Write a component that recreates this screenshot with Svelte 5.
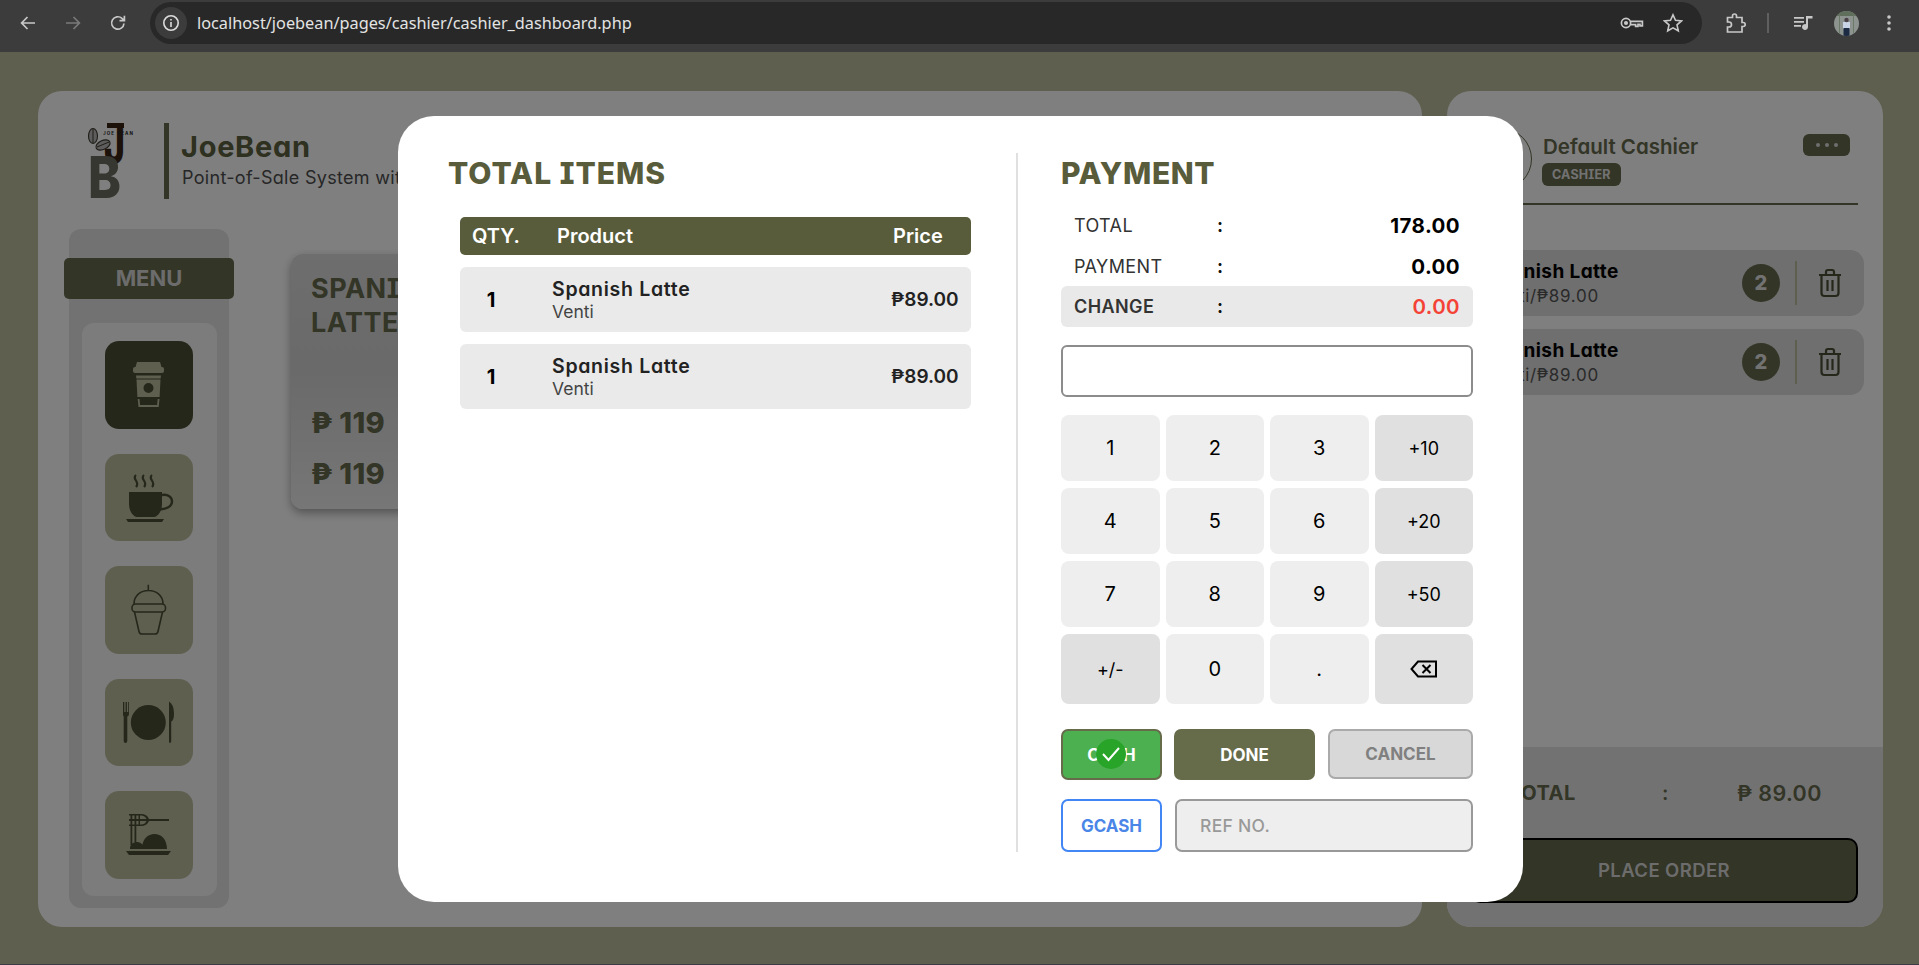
<script>
	const keys = [
		{ label: '1' }, { label: '2' }, { label: '3' }, { label: '+10', fn: true },
		{ label: '4' }, { label: '5' }, { label: '6' }, { label: '+20', fn: true },
		{ label: '7' }, { label: '8' }, { label: '9' }, { label: '+50', fn: true },
		{ label: '+/-', fn: true }, { label: '0' }, { label: '.' }, { label: 'back', fn: true }
	];
	const lines = [
		{ name: 'Spanish Latte', size: 'Venti', price: '₱89.00' },
		{ name: 'Spanish Latte', size: 'Venti', price: '₱89.00' }
	];
</script>

<div class="page">
	<header class="chrome">
		<div class="nav">
			<svg width="18" height="18" viewBox="0 0 18 18" fill="none" stroke="#c8c8c8" stroke-width="1.7"><path d="M16 9H3M8.5 3 2.6 9l5.9 6" /></svg>
			<svg width="18" height="18" viewBox="0 0 18 18" fill="none" stroke="#7a7a7a" stroke-width="1.7"><path d="M2 9h13M9.5 3l5.9 6-5.9 6" /></svg>
			<svg width="18" height="18" viewBox="0 0 18 18" fill="none" stroke="#c8c8c8" stroke-width="1.7"><path d="M15 9.5A6.2 6.2 0 1 1 13 4.4L15.2 6.5M15.4 1.8v4.9h-4.9" /></svg>
		</div>
		<div class="omnibox">
			<span class="chip">
				<svg width="18" height="18" viewBox="0 0 18 18" fill="none" stroke="#dcdcdc" stroke-width="1.6"><circle cx="9" cy="9" r="7.2" /><path d="M9 8v5M9 5v1.6" /></svg>
			</span>
			<span class="url">localhost/joebean/pages/cashier/cashier_dashboard.php</span>
			<svg class="key" width="24" height="16" viewBox="0 0 24 16" fill="none" stroke="#c8c8c8" stroke-width="1.7"><circle cx="6" cy="8" r="4.6" /><circle cx="6" cy="8" r="1.2" fill="#c8c8c8" /><path d="M10.6 6.4H22.4v4.4H20V9.4h-2v2h-2.4V9.6h-5" /></svg>
			<svg width="20" height="20" viewBox="0 0 20 20" fill="none" stroke="#c8c8c8" stroke-width="1.6"><path d="m10 1.8 2.5 5.5 6 .6-4.5 4 1.3 5.9-5.3-3-5.300 3 1.300-5.900-4.500-4 6-.6z" /></svg>
		</div>
		<div class="tools">
			<svg width="20" height="20" viewBox="0 0 20 20" fill="none" stroke="#c8c8c8" stroke-width="1.7"><path d="M1.500 4.500h5V3a2 2 0 0 1 4 0v1.500h5.500v5h1.200a2 2 0 0 1 0 4H16v5.500H1.500v-5h1.500a2.500 2.500 0 0 0 0-5H1.500z" /></svg>
			<span class="sep"></span>
			<svg width="20" height="18" viewBox="0 0 20 18" fill="#c8c8c8"><path d="M1 3h10v1.700H1zM1 7h10v1.700H1zM1 11h7v1.700H1zM13 2h6.500v2.500H15V13a3 3 0 1 1-2-2.800z" /></svg>
			<span class="avatar">
				<svg width="25" height="25" viewBox="0 0 25 25"><rect width="25" height="25" fill="#8d9490" /><rect width="25" height="5" fill="#5f6f5c" /><rect x="5" y="4" width="1" height="18" fill="#6b7a68" /><rect x="19" y="4" width="1" height="18" fill="#6b7a68" /><rect x="9" y="11" width="7" height="7" fill="#c9d3e6" /><rect x="9.500" y="17" width="6" height="8" fill="#1d2a44" /><circle cx="12.500" cy="9" r="2.200" fill="#4a4048" /></svg>
			</span>
			<svg width="6" height="18" viewBox="0 0 6 18" fill="#c8c8c8"><circle cx="3" cy="3" r="1.800" /><circle cx="3" cy="9" r="1.800" /><circle cx="3" cy="15" r="1.800" /></svg>
		</div>
	</header>

	<div class="dash">
		<main class="board">
			<div class="brand">
				<svg class="logo" width="46" height="78" viewBox="0 0 46 78">
					<text x="16" y="41" class="logo-j" textLength="21" lengthAdjust="spacingAndGlyphs">J</text>
					<rect x="19" y="1" width="17" height="5" fill="#3a2414" />
					<text x="0" y="76" class="logo-b" textLength="33" lengthAdjust="spacingAndGlyphs">B</text>
					<text x="15" y="13" class="logo-name" textLength="30">JOE BEAN</text>
					<ellipse cx="5" cy="14" rx="4.500" ry="7.500" fill="#bbb" stroke="#3d3a30" stroke-width="1.100" />
					<path d="M5 7v14" stroke="#3d3a30" />
					<ellipse cx="15" cy="23" rx="7.500" ry="4.500" transform="rotate(-25 15 23)" fill="#bbb" stroke="#3d3a30" stroke-width="1.100" />
					<path d="m9 25 12-5" stroke="#3d3a30" fill="none" />
				</svg>
				<span class="brand-rule"></span>
				<div>
					<div class="brand-name">JoeBean</div>
					<div class="brand-sub">Point-of-Sale System with Inventory</div>
				</div>
			</div>
			<div class="board-body">
				<nav class="menu">
					<div class="menu-title">MENU</div>
					<div class="menu-list">
						<div class="tile active">
							<svg viewBox="0 0 88 87" fill="currentColor">
								<path d="M32 21h23l1.500 5H30.500z" />
								<rect x="28" y="26" width="31" height="6" rx="2" />
								<path d="M31 34.500h25l-.4 3H31.400z" />
								<path fill-rule="evenodd" d="M31.500 38.500h24L54.600 56H32.400zM43.500 42a5 5 0 1 0 0 10 5 5 0 0 0 0-10z" />
								<path d="M32.700 58h1.800l.6 6h17l.6-6h1.800l-.8 8H33.500z" />
							</svg>
						</div>
						<div class="tile">
							<svg viewBox="0 0 88 87" fill="currentColor">
								<path d="M24 38h33v12c0 7-4 12.500-8 13H32c-4-.5-8-6-8-13z" />
								<path d="M57 41c6-1 10 2 10 6.500S62 55 55 55.500" fill="none" stroke="currentColor" stroke-width="2.400" />
								<path d="M21 65h38l-2 3H23z" />
								<path d="M31 21c-5 4 5 7 0 12M39 21c-5 4 5 7 0 12M47 21c-5 4 5 7 0 12" fill="none" stroke="currentColor" stroke-width="2.200" />
							</svg>
						</div>
						<div class="tile">
							<svg viewBox="0 0 88 87" fill="none" stroke="currentColor" stroke-width="1.600">
								<path d="M43.300 18.700v6M29 38c0-18 29-18 29 0" />
								<rect x="27" y="38" width="33.500" height="8" rx="3.500" />
								<path d="M29.500 46 34 65.500q.5 2.500 3 2.500h13q2.500 0 3-2.500L57.500 46" />
							</svg>
						</div>
						<div class="tile">
							<svg viewBox="0 0 88 87" fill="currentColor">
								<circle cx="43.300" cy="43.500" r="17.500" />
								<path d="M18 23h1.300v10h1.300V23h1.300v10h1.300V23H24v12q0 2-1.700 2.500V62q0 2-1.800 2t-1.800-2V37.500Q18 37 18 35z" />
								<path d="M64 22.500q5 3 5 12 0 7-2.800 8V62q0 2-1.200 2t-1-2z" />
							</svg>
						</div>
						<div class="tile">
							<svg viewBox="0 0 88 87" fill="currentColor">
								<path d="M21 60h45l-3 4H24z" />
								<path d="M37 58c0-10 6-15 12.500-15S62 48 62 58zM25 58c0-5 3-7 7-7s7 3 6 7z" />
								<path d="M24 23h12q6 0 8 5h20v2H44q-2 5-8 5H24v-1.500h12q4 0 5.500-3.500H24V28h17.500Q40 24.500 36 24.500H24z" />
								<path d="M25.500 23h1.800v31h-1.800zM29.500 23h1.800v28h-1.800zM33.500 23h1.500v12h-1.500z" />
							</svg>
						</div>
					</div>
				</nav>
				<article class="product">
					<h3>SPANISH<br />LATTE</h3>
					<div class="product-price">₱ 119</div>
					<div class="product-price">₱ 119</div>
				</article>
			</div>
		</main>

		<aside class="cart">
			<div class="cashier">
				<span class="cashier-pic"></span>
				<div class="cashier-info">
					<div class="cashier-name">Default Cashier</div>
					<span class="cashier-role">CASHIER</span>
				</div>
				<button class="more" aria-label="More"><i></i><i></i><i></i></button>
			</div>
			<div class="cart-list">
				{#each [0, 1] as i (i)}
					<div class="cart-row">
						<div class="cart-text">
							<div class="cart-name">Spanish Latte</div>
							<div class="cart-sub">Venti/₱89.00</div>
						</div>
						<span class="cart-qty">2</span>
						<span class="cart-rule"></span>
						<svg class="trash" width="26" height="30" viewBox="0 0 26 30" fill="none" stroke="#4a4e34" stroke-width="2.200"><path d="M2 7h22M9 7V4q0-2 2-2h4q2 0 2 2v3M4.500 7v18q0 3 3 3h11q3 0 3-3V7M10.500 12v11M15.500 12v11" /></svg>
					</div>
				{/each}
			</div>
			<div class="cart-foot">
				<div class="cart-total">
					<span class="ct-label">TOTAL</span>
					<span class="ct-colon">:</span>
					<span class="ct-value">₱ 89.00</span>
				</div>
				<button class="place">PLACE ORDER</button>
			</div>
		</aside>
	</div>

	<div class="overlay">
		<section class="modal">
			<div class="items">
				<h2>TOTAL ITEMS</h2>
				<div class="thead">
					<span class="th-qty">QTY.</span>
					<span class="th-product">Product</span>
					<span class="th-price">Price</span>
				</div>
				{#each lines as line, i (i)}
					<div class="tr">
						<span class="td-qty">1</span>
						<div class="td-product">
							<div class="td-name">{line.name}</div>
							<div class="td-size">{line.size}</div>
						</div>
						<span class="td-price">{line.price}</span>
					</div>
				{/each}
			</div>

			<div class="payment">
				<h2>PAYMENT</h2>
				<div class="sum">
					<span class="sum-label">TOTAL</span><span class="sum-colon">:</span><span class="sum-value">178.00</span>
				</div>
				<div class="sum">
					<span class="sum-label">PAYMENT</span><span class="sum-colon">:</span><span class="sum-value">0.00</span>
				</div>
				<div class="sum change">
					<span class="sum-label">CHANGE</span><span class="sum-colon">:</span><span class="sum-value">0.00</span>
				</div>
				<input class="amount" type="text" />
				<div class="keypad">
					{#each keys as key (key.label)}
						<button class="key-btn" class:fn={key.fn}>
							{#if key.label === 'back'}
								<svg width="28" height="18" viewBox="0 0 28 18" fill="none" stroke="#000" stroke-width="2"><path d="M8 1.500h18v15H8L1.500 9zM12.500 5l8 8M20.500 5l-8 8" /></svg>
							{:else}
								{key.label}
							{/if}
						</button>
					{/each}
				</div>
				<div class="actions">
					<button class="cash">
						CASH
						<span class="tick">
							<svg width="20" height="16" viewBox="0 0 20 16" fill="none" stroke="#fff" stroke-width="2"><path d="m2 8 5.500 6L18 2" /></svg>
						</span>
					</button>
					<button class="done">DONE</button>
					<button class="cancel">CANCEL</button>
				</div>
				<div class="gcash-row">
					<button class="gcash">GCASH</button>
					<input class="ref" type="text" placeholder="REF NO." />
				</div>
			</div>
		</section>
	</div>
</div>

<style>
	:global(body) {
		font-family: Inter, 'Noto Sans', sans-serif;
		font-feature-settings: 'cv11', 'cv08';
	}

	button {
		font-family: inherit;
		font-feature-settings: inherit;
		cursor: pointer;
	}

	.page {
		position: relative;
		height: 965px;
		display: flex;
		flex-direction: column;
		overflow: hidden;
		background: #bebea0;
		border-bottom: 1px solid #3c3c44;
		box-sizing: border-box;
	}

	/* browser bar */
	.chrome {
		height: 52px;
		flex-shrink: 0;
		display: flex;
		align-items: center;
		background: #3c3c3c;
		padding: 0 18px 6px 19px;
		box-sizing: border-box;
	}

	.nav {
		display: flex;
		gap: 27px;
		width: 131px;
		flex-shrink: 0;
	}

	.omnibox {
		flex-shrink: 0;
		width: 1552px;
		height: 42px;
		display: flex;
		align-items: center;
		background: #282828;
		border-radius: 21px;
		padding: 0 19px 0 5px;
		box-sizing: border-box;
	}

	.chip {
		width: 32px;
		height: 32px;
		border-radius: 50%;
		background: #3c3c3c;
		display: flex;
		align-items: center;
		justify-content: center;
		margin-right: 10px;
	}

	.url {
		flex: 1;
		color: #e3e3e3;
		font-family: 'Noto Sans', sans-serif;
		font-size: 16.300px;
		font-feature-settings: normal;
	}

	.key {
		margin-right: 19px;
	}

	.tools {
		flex: 1;
		display: flex;
		align-items: center;
		padding-left: 24px;
	}

	.sep {
		width: 2px;
		height: 20px;
		background: #5f5f5f;
		margin: 0 24px 0 21px;
	}

	.avatar {
		width: 25px;
		height: 25px;
		border-radius: 50%;
		overflow: hidden;
		margin: 0 27px 0 21px;
		display: block;
	}

	.avatar svg {
		display: block;
	}

	/* dashboard behind the dialog */
	.dash {
		flex: 1;
		min-height: 0;
		display: flex;
		gap: 25px;
		padding: 39px 36px 37px 38px;
	}

	.board {
		flex: 1;
		background: #fff;
		border-radius: 24px;
		padding: 31px 26px 19px 26px;
		display: flex;
		flex-direction: column;
		min-width: 0;
	}

	.brand {
		display: flex;
		align-items: center;
		gap: 13px;
		height: 78px;
		padding-left: 24px;
	}

	.logo {
		margin-right: 17px;
		overflow: visible;
	}

	.logo-j {
		font-size: 55px;
		font-weight: 800;
		fill: #3a2414;
	}

	.logo-b {
		font-size: 58px;
		font-weight: 800;
		fill: #6e6e62;
	}

	.logo-name {
		font-size: 4.500px;
		font-weight: 700;
		fill: #222;
	}

	.brand-rule {
		width: 5px;
		height: 76px;
		background: #666a4c;
	}

	.brand-name {
		font-size: 29px;
		font-weight: 700;
		color: #5c6040;
		line-height: 30px;
		margin-bottom: 4px;
		margin-left: -1px;
		letter-spacing: 0.7px;
	}

	.brand-sub {
		font-size: 18px;
		color: #4e4e4e;
		line-height: 24px;
		white-space: nowrap;
		letter-spacing: 0.3px;
	}

	.board-body {
		flex: 1;
		display: flex;
		gap: 62px;
		margin-top: 29px;
		min-height: 0;
	}

	.menu {
		width: 160px;
		margin-left: 5px;
		background: #e4e4e4;
		border-radius: 12px;
		display: flex;
		flex-direction: column;
		align-items: center;
		padding: 29px 0 12px;
		box-sizing: border-box;
	}

	.menu-title {
		width: 170px;
		flex-shrink: 0;
		height: 41px;
		background: #666a4c;
		border-radius: 5px;
		text-align: center;
		font-size: 22px;
		line-height: 41px;
		font-weight: 700;
		margin-bottom: 24px;
		color: #d8d8d8;
	}

	.menu-list {
		flex: 1;
		width: 135px;
		background: #f8f8f8;
		border-radius: 12px;
		display: flex;
		flex-direction: column;
		align-items: center;
		gap: 25px;
		padding-top: 18px;
		box-sizing: border-box;
	}

	.tile {
		width: 88px;
		height: 87.500px;
		flex-shrink: 0;
		border-radius: 14px;
		background: #bebea0;
		color: #4a4e34;
	}

	.tile.active {
		background: #4a4e34;
		color: #bebea0;
	}

	.tile svg {
		display: block;
		width: 88px;
		height: 87px;
	}

	.product {
		width: 320px;
		height: 255px;
		margin-top: 25px;
		border-radius: 12px;
		background: linear-gradient(#dcdcdc, #d4d4d4 45%, #eeeeee);
		box-shadow: 0 4px 10px rgba(0, 0, 0, 0.35);
		padding: 18px 20px;
		box-sizing: border-box;
		color: #666a4c;
	}

	.product h3 {
		margin: 0 0 66px;
		font-size: 27px;
		line-height: 34px;
		font-weight: 700;
		letter-spacing: 0.5px;
	}

	.product-price {
		font-size: 29px;
		font-weight: 800;
		line-height: 34px;
		margin-bottom: 17px;
		letter-spacing: 0.3px;
	}

	.cart {
		width: 436px;
		flex-shrink: 0;
		background: #fff;
		border-radius: 24px;
		display: flex;
		flex-direction: column;
		overflow: hidden;
	}

	.cashier {
		display: flex;
		align-items: flex-start;
		margin: 0 25px 0 23px;
		padding: 35px 0 0;
		height: 114px;
		box-sizing: border-box;
		border-bottom: 2px solid #666a4c;
	}

	.cashier-pic {
		width: 60px;
		height: 60px;
		border-radius: 50%;
		border: 1px solid #666a4c;
		margin: 2px 11px 0 0;
		flex-shrink: 0;
	}

	.cashier-info {
		flex: 1;
		margin-top: 8px;
	}

	.cashier-name {
		font-size: 20.500px;
		font-weight: 600;
		color: #666a4c;
		line-height: 26px;
		margin-bottom: 3px;
	}

	.cashier-role {
		display: inline-block;
		background: #666a4c;
		color: #e4e4e4;
		font-size: 12.500px;
		font-weight: 700;
		line-height: 23px;
		padding: 0 10px;
		border-radius: 6px;
		margin-left: -1px;
		letter-spacing: 0.2px;
	}

	.more {
		width: 47px;
		height: 22px;
		margin: 8px 8px 0 0;
		border: 0;
		border-radius: 6px;
		background: #666a4c;
		display: flex;
		align-items: center;
		justify-content: center;
		gap: 5px;
		padding: 0;
	}

	.more i {
		width: 4px;
		height: 4px;
		border-radius: 50%;
		background: #dedede;
	}

	.cart-list {
		flex: 1;
		display: flex;
		flex-direction: column;
		gap: 13px;
		padding: 45px 19px 0 11px;
	}

	.cart-row {
		height: 66px;
		background: #dedede;
		border-radius: 14px;
		display: flex;
		align-items: center;
	}

	.cart-text {
		flex: 1;
		padding: 2px 0 0 28px;
	}

	.cart-name {
		font-size: 19px;
		font-weight: 700;
		color: #000;
		line-height: 24px;
		letter-spacing: 0.4px;
	}

	.cart-sub {
		font-size: 17px;
		color: #555;
		line-height: 24px;
		letter-spacing: 0.7px;
	}

	.cart-qty {
		width: 38px;
		height: 38px;
		border-radius: 50%;
		background: #666a4c;
		color: #e4e4e4;
		font-size: 20px;
		font-weight: 800;
		line-height: 38px;
		text-align: center;
	}

	.cart-rule {
		width: 2px;
		height: 44px;
		background: #bebea0;
		margin: 0 20px 0 15px;
	}

	.trash {
		margin-right: 21px;
	}

	.cart-foot {
		background: #e4e4e4;
		height: 180px;
		flex-shrink: 0;
		padding: 0 25px 24px 23px;
		box-sizing: border-box;
	}

	.cart-total {
		height: 91px;
		display: flex;
		align-items: center;
		font-size: 20px;
		color: #666a4c;
		font-weight: 700;
	}

	.ct-label {
		margin-left: 38px;
		width: 154px;
		letter-spacing: 0.5px;
	}

	.ct-colon {
		width: 75px;
		font-weight: 600;
	}

	.ct-value {
		font-size: 21.500px;
		font-weight: 600;
		white-space: nowrap;
		letter-spacing: 0.4px;
	}

	.place {
		width: 100%;
		height: 65px;
		border-radius: 10px;
		border: 2px solid #000;
		background: #666a4c;
		color: #d8d8d8;
		font-size: 18.500px;
		font-weight: 600;
		letter-spacing: 0.4px;
		padding: 0 0 2px;
	}

	/* dialog */
	.overlay {
		position: absolute;
		inset: 52px 0 0 0;
		background: rgba(0, 0, 0, 0.5);
		display: flex;
		align-items: center;
		justify-content: center;
		padding: 2px 0 0 2px;
	}

	.modal {
		width: 1125px;
		height: 786px;
		background: #fff;
		border-radius: 36px;
		display: flex;
		padding: 37px 50px 50px 51px;
		box-sizing: border-box;
	}

	.modal h2 {
		margin: 0;
		font-size: 30px;
		line-height: 40px;
		font-weight: 800;
		color: #585c3b;
		letter-spacing: 1px;
	}

	.items {
		width: 569px;
		flex-shrink: 0;
		border-right: 2px solid #e0e0e0;
		box-sizing: border-box;
	}

	.items h2 {
		margin: 0 0 24px -1px;
	}

	.thead,
	.tr {
		margin: 0 45px 0 11px;
		display: flex;
		align-items: center;
	}

	.thead {
		height: 38px;
		background: #585c3b;
		border-radius: 5px;
		color: #fff;
		font-size: 20px;
		font-weight: 600;
		margin-bottom: 12px;
	}

	.th-qty {
		width: 97px;
		padding-left: 12px;
		box-sizing: border-box;
	}

	.th-product {
		flex: 1;
	}

	.th-price {
		width: 78px;
	}

	.tr {
		height: 65px;
		background: #eaeaea;
		border-radius: 6px;
		margin-bottom: 12px;
	}

	.td-qty {
		width: 92px;
		padding-right: 30px;
		box-sizing: border-box;
		text-align: center;
		font-size: 20px;
		font-weight: 700;
		color: #000;
	}

	.td-product {
		flex: 1;
	}

	.td-name {
		font-size: 19.500px;
		font-weight: 600;
		color: #222;
		line-height: 24px;
		letter-spacing: 0.7px;
	}

	.td-size {
		font-size: 17.500px;
		color: #444;
		line-height: 22px;
	}

	.td-price {
		width: 80px;
		font-size: 19px;
		font-weight: 600;
		color: #222;
		white-space: nowrap;
	}

	.payment {
		flex: 1;
		min-width: 0;
		padding-left: 43px;
		display: flex;
		flex-direction: column;
	}

	.payment h2 {
		margin-bottom: 12px;
		letter-spacing: 0.6px;
	}

	.sum {
		height: 41px;
		display: flex;
		align-items: center;
		padding: 0 13px;
		font-size: 18px;
		color: #333;
		letter-spacing: 0.4px;
	}

	.sum-label {
		width: 143px;
	}

	.sum-colon {
		font-weight: 700;
		color: #111;
	}

	.sum-value {
		flex: 1;
		text-align: right;
		font-size: 20.500px;
		font-weight: 700;
		color: #000;
	}

	.change {
		background: #e9e9e9;
		border-radius: 6px;
	}

	.change .sum-label {
		font-weight: 600;
	}

	.change .sum-value {
		color: #f44336;
		font-weight: 600;
	}

	.amount {
		height: 52px;
		margin-top: 18px;
		border: 2px solid #8c8c8c;
		border-radius: 6px;
		background: #fff;
		box-sizing: border-box;
		flex-shrink: 0;
	}

	.keypad {
		display: grid;
		grid-template-columns: repeat(4, 1fr);
		grid-template-rows: 66px 66px 66px 70px;
		gap: 7px 6px;
		margin-top: 18px;
	}

	.key-btn {
		border: 0;
		border-radius: 8px;
		background: #eeeeee;
		color: #000;
		font-size: 20px;
		padding: 0;
		display: flex;
		align-items: center;
		justify-content: center;
	}

	.key-btn.fn {
		background: #e0e0e0;
		font-size: 18px;
	}

	.actions {
		display: flex;
		margin-top: 25px;
		gap: 12px;
	}

	.actions button {
		height: 51px;
		border-radius: 7px;
		font-size: 17px;
		font-weight: 700;
		padding: 0;
		box-sizing: border-box;
	}

	.cash {
		position: relative;
		width: 101px;
		background: #4caf50;
		color: #fff;
		border: 2px solid #666b4a;
	}

	.tick {
		position: absolute;
		left: 33px;
		top: 8px;
		width: 30px;
		height: 30px;
		border-radius: 50%;
		background: #28a428;
		display: flex;
		align-items: center;
		justify-content: center;
	}

	.done {
		width: 141px;
		background: #666b4a;
		color: #fff;
		border: 0;
	}

	.actions .cancel {
		flex: 1;
		min-width: 0;
		height: 50px;
		margin-left: 1px;
		background: #d8d8d8;
		color: #808080;
		border: 2px solid #aaa;
	}

	.gcash-row {
		display: flex;
		gap: 13px;
		margin-top: 19px;
	}

	.gcash {
		width: 101px;
		height: 53px;
		background: #fff;
		color: #4a86e8;
		border: 2px solid #4285f4;
		border-radius: 7px;
		font-size: 17px;
		font-weight: 700;
		padding: 0;
	}

	.ref {
		flex: 1;
		width: 0;
		min-width: 0;
		height: 53px;
		background: #eee;
		border: 2px solid #999;
		border-radius: 7px;
		padding: 0 23px;
		box-sizing: border-box;
		font-family: inherit;
		font-size: 17.500px;
		font-weight: 500;
		letter-spacing: 0.3px;
	}

	.ref::placeholder {
		color: #999;
	}
</style>
